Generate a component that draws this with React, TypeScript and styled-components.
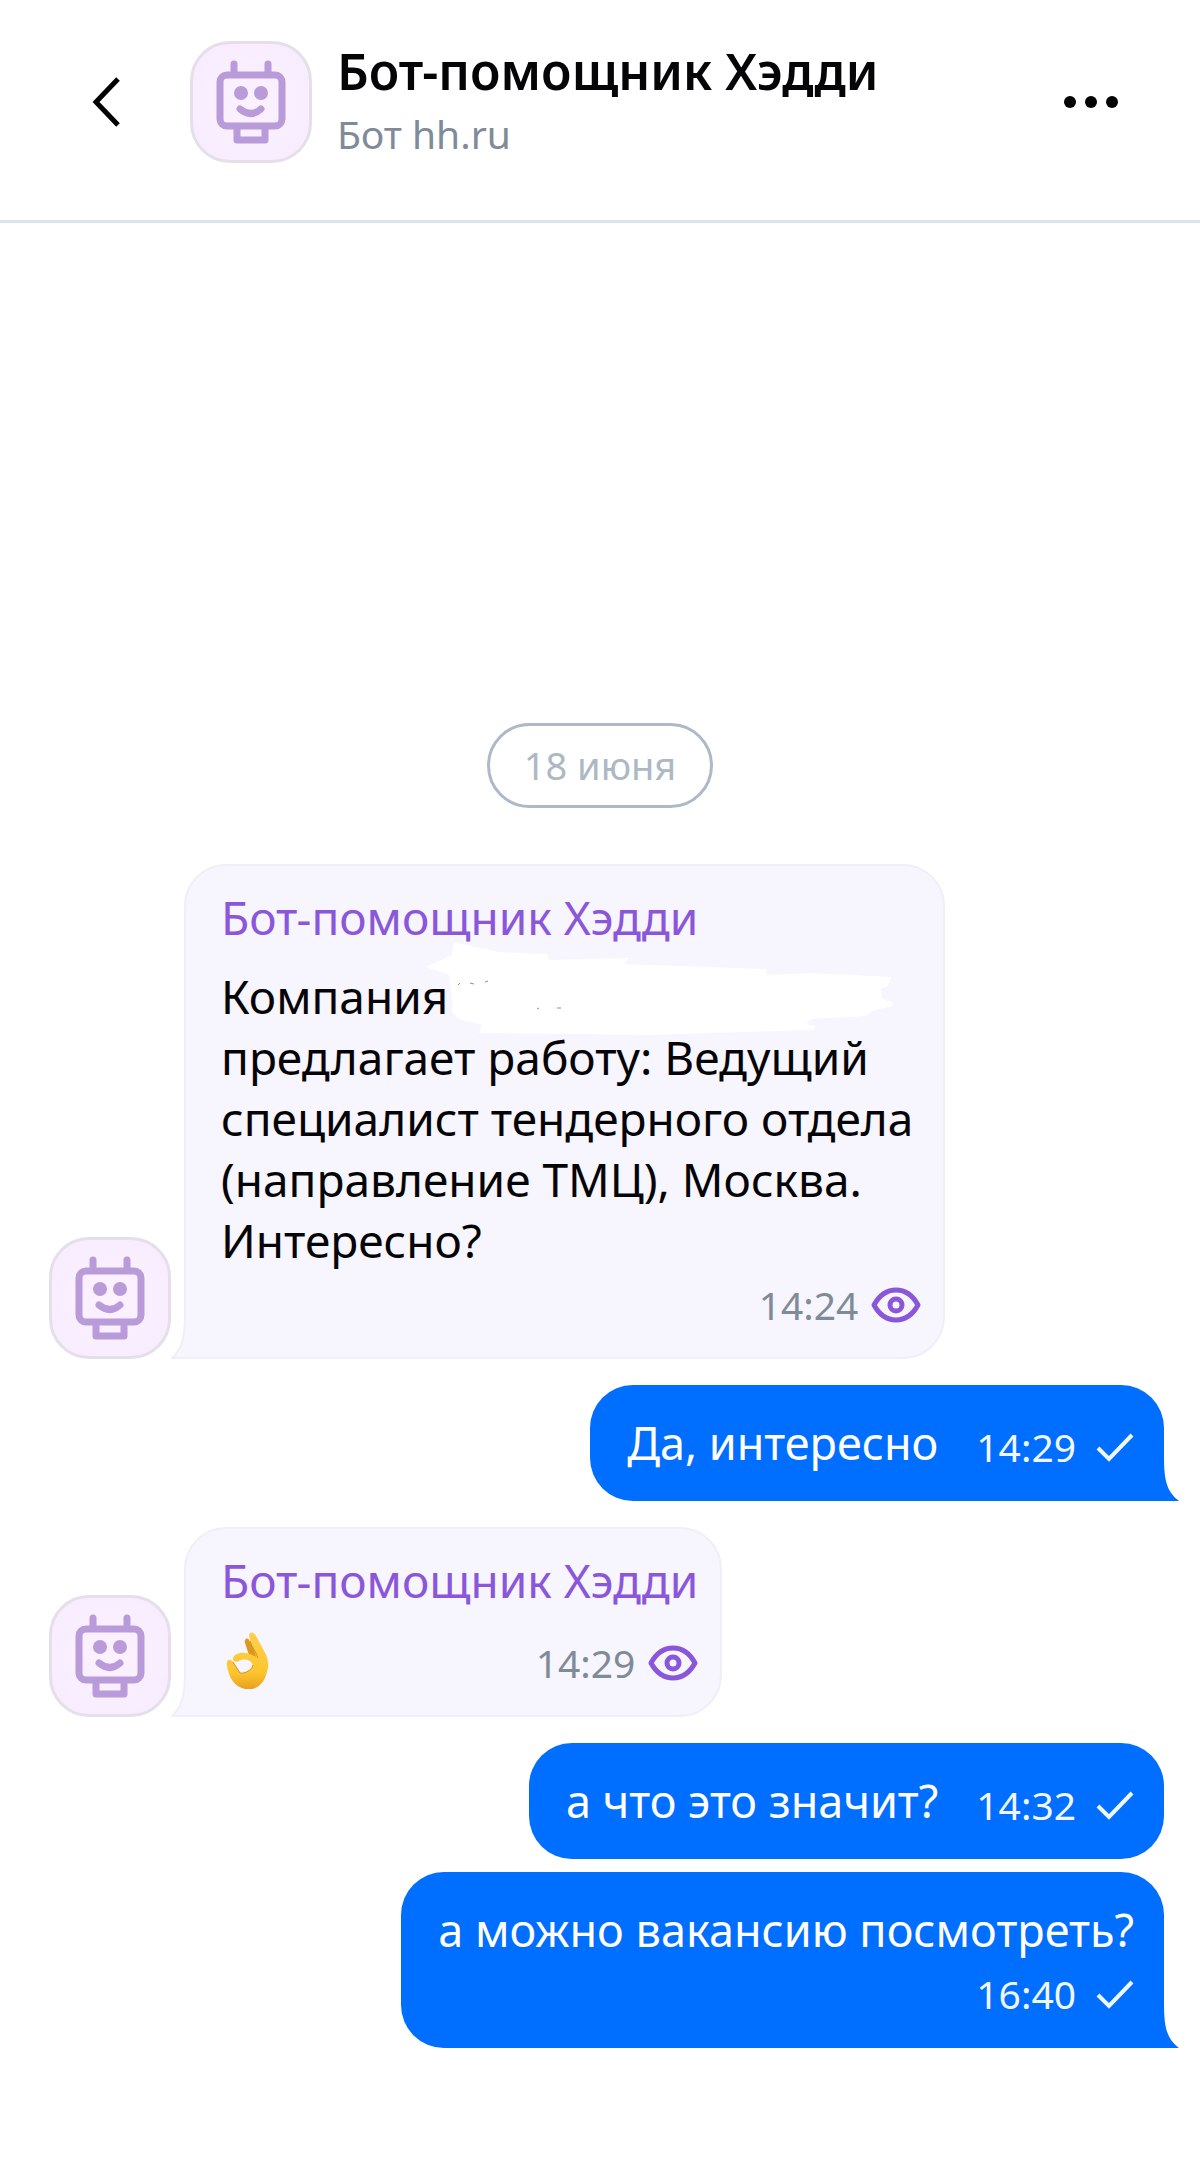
import React from "react";
import styled, { createGlobalStyle } from "styled-components";

const GlobalStyle = createGlobalStyle`
  * { box-sizing: border-box; }
  body {
    margin: 0;
    background: #ffffff;
    color: #050507;
    font-family: "Noto Sans", "Open Sans", sans-serif;
  }
`;

const Page = styled.div`
  display: flex;
  flex-direction: column;
  min-height: 100vh;
`;

const Header = styled.header`
  display: flex;
  align-items: flex-start;
  padding: 41px 77px 56px 74px;
  border-bottom: 3px solid #dde3ec;
`;

const IconButton = styled.button`
  display: flex;
  align-items: center;
  justify-content: center;
  width: 64px;
  height: 122px;
  padding: 0;
  border: 0;
  background: none;
  color: #000000;
  cursor: pointer;
`;

const AvatarBox = styled.div`
  flex: none;
  width: 122px;
  height: 122px;
  border: 3px solid #e6dfe9;
  border-radius: 40px;
  background: radial-gradient(circle at 50% 50%, #fbf1ff, #f6ecfe);
  overflow: hidden;

  svg { display: block; width: 100%; height: 100%; }
`;

const HeaderAvatar = styled.div`
  margin-left: 52px;
`;

const Titles = styled.div`
  flex: 1;
  min-width: 0;
  margin: -2px 0 0 25px;
`;

const Title = styled.h1`
  margin: 0;
  font-size: 50px;
  line-height: 65px;
  font-weight: 600;
  white-space: nowrap;
`;

const Subtitle = styled.p`
  margin: 0;
  font-size: 39px;
  line-height: 60px;
  color: #7f8b98;
`;

const Chat = styled.main`
  display: flex;
  flex: 1;
  flex-direction: column;
  justify-content: flex-end;
  padding-bottom: 123px;
`;

const DateChip = styled.time`
  align-self: center;
  margin-bottom: 56px;
  padding: 12px 34px;
  border: 3px solid #adb8c8;
  border-radius: 43px;
  font-size: 38px;
  line-height: 55px;
  color: #adb8c5;
`;

const Row = styled.div<{ $mine?: boolean; $tight?: boolean }>`
  display: flex;
  align-items: flex-end;
  justify-content: ${(p) => (p.$mine ? "flex-end" : "flex-start")};
  gap: 13px;
  margin-top: ${(p) => (p.$tight ? 13 : 26)}px;
  padding: 0 36px 0 49px;

  &:first-of-type { margin-top: 0; }
`;

const Incoming = styled.article`
  position: relative;
  padding: 21px 22px 26px 35px;
  border: 2px solid #f0eef8;
  border-radius: 42px 42px 42px 0;
  background: #f7f5fd;
`;

const Outgoing = styled.article<{ $tail?: boolean; $stacked?: boolean }>`
  position: relative;
  display: flex;
  flex-direction: ${(p) => (p.$stacked ? "column" : "row")};
  align-items: flex-end;
  gap: ${(p) => (p.$stacked ? 8 : 38)}px;
  padding: 28px 30px 28px 37px;
  border-radius: 43px 43px ${(p) => (p.$tail ? 0 : 43)}px 43px;
  background: #006eff;
  color: #ffffff;
`;

const LeftTail = styled.svg`
  position: absolute;
  left: -15px;
  bottom: -2px;
`;

const RightTail = styled.svg`
  position: absolute;
  right: -15px;
  bottom: 0;
`;

const Sender = styled.h2`
  margin: 0 0 19px;
  font-size: 46px;
  line-height: 60px;
  font-weight: 400;
  color: #8a57da;
`;

const Text = styled.p`
  margin: 0;
  font-size: 45px;
  line-height: 60px;
`;

const LongText = styled.p`
  margin: 0;
  padding-right: 8px;
  font-size: 46px;
  line-height: 61px;
  white-space: pre-line;
`;

const Meta = styled.div<{ $mine?: boolean }>`
  display: flex;
  align-items: center;
  justify-content: flex-end;
  gap: ${(p) => (p.$mine ? 20 : 13)}px;
  font-size: 39px;
  line-height: 52px;
  color: ${(p) => (p.$mine ? "#f0f7ff" : "#7f8b98")};
`;

const MetaBelow = styled(Meta)`
  margin-top: 8px;
`;

const ReactionLine = styled.div`
  display: flex;
  align-items: flex-end;
  justify-content: space-between;
  height: 60px;
`;

const Hidden = styled.span`
  position: relative;
`;

const Smudge = styled.svg`
  position: absolute;
  left: -24px;
  top: -23px;
`;

function Avatar() {
  return (
    <AvatarBox>
      <svg viewBox="0 0 116 116" fill="none" stroke="#b99bd9" strokeWidth="7" role="img" aria-label="Хэдди">
        <path d="M41 28V20M75 28V20" strokeLinecap="round" />
        <rect x="27" y="31" width="62" height="51" rx="7" />
        <path d="M44 84V96H72V84" strokeLinejoin="round" />
        <path d="M47 65Q58 74 68 65" strokeLinecap="round" />
        <circle cx="48" cy="49" r="7" fill="#b99bd9" stroke="none" />
        <circle cx="68" cy="49" r="7" fill="#b99bd9" stroke="none" />
      </svg>
    </AvatarBox>
  );
}

function Eye() {
  return (
    <svg width="50" height="36" viewBox="0 0 50 36" fill="none" stroke="#8a57da" strokeWidth="5">
      <path d="M3 18C14 -2 36 -2 47 18C36 38 14 38 3 18Z" strokeLinejoin="round" />
      <circle cx="25" cy="18" r="6" />
    </svg>
  );
}

function Check() {
  return (
    <svg width="38" height="30" viewBox="0 0 38 30" fill="none" stroke="#f0f7ff" strokeWidth="4">
      <path d="M2 16L13 27L36 3" />
    </svg>
  );
}

function OkHand() {
  return (
    <svg width="52" height="60" viewBox="0 0 52 60" role="img" aria-label="Окей">
      <defs>
        <linearGradient id="skin" x1="0" y1="0" x2="0" y2="1">
          <stop offset="0" stopColor="#ffd04a" />
          <stop offset="0.7" stopColor="#fdc62f" />
          <stop offset="1" stopColor="#e8a01f" />
        </linearGradient>
      </defs>
      <path d="M24 14C23 10 26 8 28 11L38 30L34 38L28 26Z" fill="#dd9820" />
      <path d="M28 6C29 2 33 3 35 7L42 20C46 27 49 34 46 43C43 56 34 62 24 60C13 58 7 47 6 36C5 31 9 29 12 33L19 44C24 45 31 41 32 36C30 31 24 29 18 32C14 34 10 31 13 27C18 22 27 23 35 28C34 21 29 15 28 6Z" fill="url(#skin)" />
      <path d="M29 12C31 19 35 22 37 29M12 33L19 44C24 45 31 41 32 36" fill="none" stroke="#d58f1c" strokeWidth="1" />
    </svg>
  );
}

function TailLeft() {
  return (
    <LeftTail width="40" height="46" viewBox="0 0 40 46" aria-hidden="true">
      <path d="M14 0C14 22 12 35 1 45H40V0Z" fill="#f7f5fd" />
      <path d="M14 0C14 22 12 35 1 45H40" fill="none" stroke="#f0eef8" strokeWidth="2" />
    </LeftTail>
  );
}

function TailRight() {
  return (
    <RightTail width="17" height="46" viewBox="0 0 17 46" aria-hidden="true">
      <path d="M0 0H2C2 24 4 36 17 46H0Z" fill="#006eff" />
    </RightTail>
  );
}

export default function App() {
  return (
    <Page>
      <GlobalStyle />
      <Header>
        <IconButton aria-label="Назад">
          <svg width="32" height="50" viewBox="0 0 32 50" fill="none" stroke="currentColor" strokeWidth="5">
            <path d="M28 2L6 25L28 48" />
          </svg>
        </IconButton>
        <HeaderAvatar>
          <Avatar />
        </HeaderAvatar>
        <Titles>
          <Title>Бот-помощник Хэдди</Title>
          <Subtitle>Бот hh.ru</Subtitle>
        </Titles>
        <IconButton aria-label="Меню">
          <svg width="56" height="14" viewBox="0 0 56 14" fill="currentColor">
            <circle cx="7" cy="7" r="6" />
            <circle cx="28" cy="7" r="6" />
            <circle cx="49" cy="7" r="6" />
          </svg>
        </IconButton>
      </Header>
      <Chat>
        <DateChip>18 июня</DateChip>
        <Row>
          <Avatar />
          <Incoming>
            <TailLeft />
            <Sender>Бот-помощник Хэдди</Sender>
            <LongText>
              Компания
              <Hidden>
                <Smudge width="480" height="96" viewBox="0 0 480 96" aria-hidden="true">
                  <path
                    d="M2 25L28 13L30 0L75 10L123 12L125 18L205 16L200 22L342 27L343 33L388 31L467 35L464 44L457 47L458 57L469 60L468 64L448 69L442 74L388 77L382 82L392 84L390 88L285 91L228 93L55 91L58 83L35 77L28 70L28 57L26 43L25 33Z"
                    fill="#ffffff"
                  />
                  <path d="M34 43L36 41M46 41L50 42M61 40L64 39M113 67L115 66M133 66L137 66" stroke="#8d8d96" strokeWidth="1" />
                </Smudge>
              </Hidden>
              {"\nпредлагает работу: Ведущий\nспециалист тендерного отдела\n(направление ТМЦ), Москва.\nИнтересно?"}
            </LongText>
            <MetaBelow>
              <time>14:24</time>
              <Eye />
            </MetaBelow>
          </Incoming>
        </Row>
        <Row $mine>
          <Outgoing $tail>
            <Text>Да, интересно</Text>
            <Meta $mine>
              <time>14:29</time>
              <Check />
            </Meta>
            <TailRight />
          </Outgoing>
        </Row>
        <Row>
          <Avatar />
          <Incoming>
            <TailLeft />
            <Sender>Бот-помощник Хэдди</Sender>
            <ReactionLine>
              <OkHand />
              <Meta>
                <time>14:29</time>
                <Eye />
              </Meta>
            </ReactionLine>
          </Incoming>
        </Row>
        <Row $mine>
          <Outgoing>
            <Text>а что это значит?</Text>
            <Meta $mine>
              <time>14:32</time>
              <Check />
            </Meta>
          </Outgoing>
        </Row>
        <Row $mine $tight>
          <Outgoing $tail $stacked>
            <Text>а можно вакансию посмотреть?</Text>
            <Meta $mine>
              <time>16:40</time>
              <Check />
            </Meta>
            <TailRight />
          </Outgoing>
        </Row>
      </Chat>
    </Page>
  );
}
